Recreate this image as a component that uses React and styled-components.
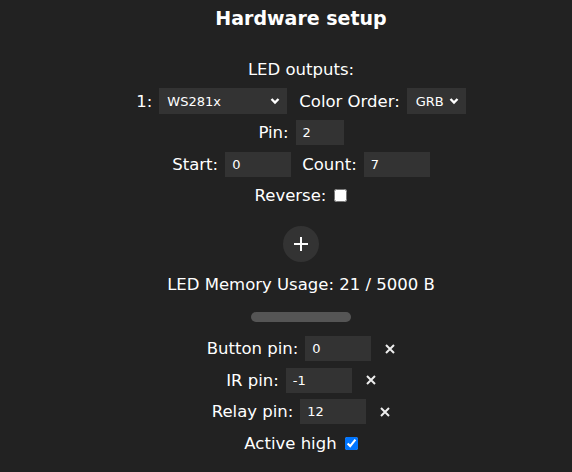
import React from "react";
import styled, { createGlobalStyle } from "styled-components";

const GlobalStyle = createGlobalStyle`
  body {
    margin: 0;
    background: #222;
    color: #fff;
    font-family: "DejaVu Sans", Verdana, sans-serif;
    font-size: 16.5px;
  }
`;

const Page = styled.div`
  display: flex;
  flex-direction: column;
  align-items: center;
  padding-left: 30px;
  text-align: center;
`;

const Title = styled.h2`
  margin: 0;
  height: 36px;
  line-height: 36px;
  font-size: 19px;
  font-weight: 700;
`;

const Row = styled.div`
  display: flex;
  align-items: center;
  justify-content: center;
  gap: ${(p) => p.$gap || 7}px;
  height: 31.5px;
  margin-top: ${(p) => p.$top || 0}px;
  white-space: nowrap;
`;

const Field = styled.input`
  box-sizing: border-box;
  width: ${(p) => p.$w || 66}px;
  height: 25px;
  padding: 0 7px;
  border: none;
  border-radius: 0;
  background: #333;
  color: #fff;
  font-family: "DejaVu Sans", Verdana, sans-serif;
  font-size: 13px;
  outline: none;
`;

const SelectWrap = styled.div`
  position: relative;
  display: inline-flex;
`;

const Select = styled.select`
  box-sizing: border-box;
  appearance: none;
  width: ${(p) => p.$w}px;
  height: 26px;
  padding: 0 ${(p) => p.$pr}px 0 ${(p) => p.$pl}px;
  border: none;
  border-radius: 0;
  background: #333;
  color: #fff;
  font-family: "DejaVu Sans", Verdana, sans-serif;
  font-size: 13px;
  outline: none;
`;

const Chevron = styled.svg`
  position: absolute;
  right: ${(p) => p.$right}px;
  top: 9px;
  pointer-events: none;
`;

const Check = styled.input`
  width: 13px;
  height: 13px;
  margin: 0 0 0 ${(p) => p.$left || 0}px;
`;

const AddButton = styled.button`
  width: 36px;
  height: 36px;
  margin-top: 14px;
  border: none;
  border-radius: 50%;
  background: #333;
  color: #fff;
  display: flex;
  align-items: center;
  justify-content: center;
  padding: 0;
`;

const Meter = styled.div`
  width: 100px;
  height: 10px;
  margin: 12px 0 11px;
  border-radius: 5px;
  background: #555;
`;

const Clear = styled.svg`
  margin-left: ${(p) => p.$left || 7}px;
`;

const Label = styled.span`
  margin-left: ${(p) => p.$left || 0}px;
`;

function Arrow({ right }) {
  return (
    <Chevron $right={right} width="10" height="8" viewBox="0 0 10 8">
      <path d="M1.5 2 L5 5.5 L8.5 2" stroke="#fff" strokeWidth="2.4" fill="none" />
    </Chevron>
  );
}

function Cross({ left }) {
  return (
    <Clear $left={left} width="10" height="10" viewBox="0 0 10 10">
      <path d="M1 1 L9 9 M9 1 L1 9" stroke="#eee" strokeWidth="2" />
    </Clear>
  );
}

export default function App() {
  return (
    <>
      <GlobalStyle />
      <Page>
        <Title>Hardware setup</Title>
        <Row $top={18}>LED outputs:</Row>
        <Row>
          <span>1:</span>
          <SelectWrap>
            <Select $w={128} $pl={8} $pr={24} defaultValue="ws">
              <option value="ws">WS281x</option>
            </Select>
            <Arrow right={7} />
          </SelectWrap>
          <Label $left={5}>Color Order:</Label>
          <SelectWrap>
            <Select $w={59} $pl={9} $pr={18} defaultValue="grb">
              <option value="grb">GRB</option>
            </Select>
            <Arrow right={7} />
          </SelectWrap>
        </Row>
        <Row>
          <span>Pin:</span>
          <Field $w={48} defaultValue="2" />
        </Row>
        <Row>
          <span>Start:</span>
          <Field defaultValue="0" />
          <Label $left={4}>Count:</Label>
          <Field defaultValue="7" />
        </Row>
        <Row>
          <span>Reverse:</span>
          <Check type="checkbox" $left={1} />
        </Row>
        <AddButton>
          <svg width="14" height="14" viewBox="0 0 14 14">
            <path d="M7 0 V14 M0 7 H14" stroke="#fff" strokeWidth="2" />
          </svg>
        </AddButton>
        <Row $top={7}>LED Memory Usage: 21 / 5000 B</Row>
        <Meter />
        <Row>
          <span>Button pin:</span>
          <Field defaultValue="0" />
          <Cross />
        </Row>
        <Row>
          <span>IR pin:</span>
          <Field defaultValue="-1" />
          <Cross />
        </Row>
        <Row>
          <span>Relay pin:</span>
          <Field defaultValue="12" />
          <Cross />
        </Row>
        <Row>
          <span>Active high</span>
          <Check type="checkbox" defaultChecked $left={1} />
        </Row>
      </Page>
    </>
  );
}
